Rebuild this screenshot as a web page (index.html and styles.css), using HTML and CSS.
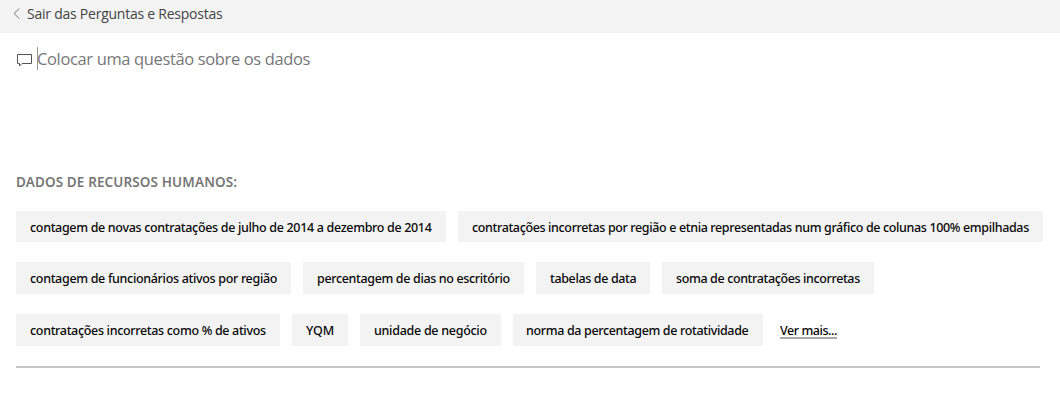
FILE: index.html
```html
<!DOCTYPE html>
<html lang="pt">
<head>
<meta charset="utf-8">
<title>Perguntas e Respostas</title>
<link rel="stylesheet" href="styles.css">
</head>
<body>
<header class="topbar">
  <svg class="back" width="7" height="11" viewBox="0 0 7 11"><path d="M6.4 .4 1 5.5l5.4 5.1"/></svg>
  <span class="exit">Sair das Perguntas e Respostas</span>
</header>
<main class="content">
  <div class="ask">
    <svg class="bubble" width="17" height="15" viewBox="0 0 17 15"><path d="M1.5 1.5h14v9H6L3.5 13v-2.5h-2z"/></svg>
    <span class="caret"></span>
    <span class="placeholder">Colocar uma questão sobre os dados</span>
  </div>
  <h2 class="heading">DADOS DE RECURSOS HUMANOS:</h2>
  <div class="suggestions">
    <div class="row first">
      <span class="chip hires">contagem de novas contratações de julho de 2014 a dezembro de 2014</span>
      <span class="chip ethnicity">contratações incorretas por região e etnia representadas num gráfico de colunas 100% empilhadas</span>
    </div>
    <div class="row">
      <span class="chip active">contagem de funcionários ativos por região</span>
      <span class="chip days">percentagem de dias no escritório</span>
      <span class="chip tables">tabelas de data</span>
      <span class="chip sum">soma de contratações incorretas</span>
    </div>
    <div class="row">
      <span class="chip percent">contratações incorretas como % de ativos</span>
      <span class="chip yqm">YQM</span>
      <span class="chip unit">unidade de negócio</span>
      <span class="chip turnover">norma da percentagem de rotatividade</span>
      <a class="more">Ver mais...</a>
    </div>
  </div>
</main>
</body>
</html>
```
FILE: styles.css
```css
* { box-sizing: border-box; }
body { margin: 0; background: #fff; font-family: "Noto Sans", "Open Sans", sans-serif; overflow: hidden; }
.topbar { height: 33px; background: #f3f3f3; display: flex; align-items: flex-start; padding: 0 0 0 13px; }
.back { margin-top: 8px; fill: none; stroke: #777; stroke-width: 1; }
.exit { margin-left: 7px; font-family: "Open Sans", sans-serif; font-size: 14px; line-height: 28px; letter-spacing: -0.24px; color: #444; white-space: nowrap; }
.content { padding: 0 20px 0 16px; }
.ask { display: flex; align-items: flex-start; height: 141px; padding-top: 14px; }
.bubble { margin-top: 6px; fill: none; stroke: #555; stroke-width: 1; }
.caret { width: 1px; height: 23px; margin-left: 4px; background: #999; }
.placeholder { margin-left: -1px; font-family: "Open Sans", sans-serif; font-size: 16.5px; line-height: 24px; letter-spacing: -0.36px; color: #777; white-space: nowrap; }
.heading { margin: 0; height: 37px; font-size: 13.5px; line-height: 16px; font-weight: 600; letter-spacing: 0.12px; color: #777; white-space: nowrap; }
.suggestions { height: 157px; border-bottom: 2px solid #c6c6c6; display: flex; flex-direction: column; gap: 20px; }
.row { display: flex; gap: 12px; height: 32px; }
.row.first { height: 31px; }
.chip { flex: none; height: 100%; padding: 0 0 0 14px; background: #f3f3f3; font-size: 12.5px; line-height: 34px; font-weight: 500; color: #080808; white-space: nowrap; }
.hires { width: 430px; letter-spacing: -0.325px; }
.ethnicity { width: 585px; letter-spacing: -0.361px; }
.active { width: 275px; letter-spacing: -0.32px; }
.days { width: 221px; letter-spacing: -0.35px; }
.tables { width: 114px; letter-spacing: -0.36px; }
.sum { width: 212px; letter-spacing: -0.374px; }
.percent { width: 264px; letter-spacing: -0.325px; }
.yqm { width: 56px; }
.unit { width: 141px; letter-spacing: -0.28px; }
.turnover { width: 250px; padding-left: 13px; letter-spacing: -0.35px; }
.more { align-self: flex-start; width: 57px; margin: 8px 0 0 5px; height: 17px; border-bottom: 2px solid #aaa; font-size: 12.5px; line-height: 17px; font-weight: 500; letter-spacing: -0.44px; color: #080808; white-space: nowrap; }
```
